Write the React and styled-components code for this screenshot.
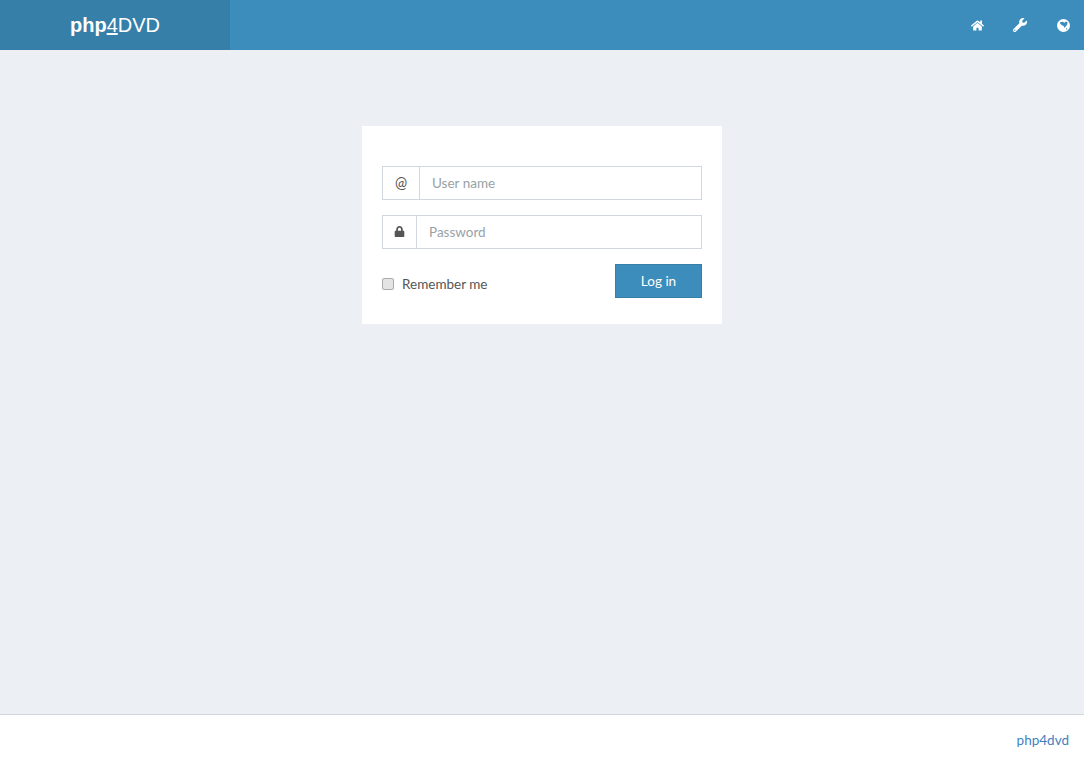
import React from "react";
import styled, { createGlobalStyle } from "styled-components";
import { FaHome, FaWrench, FaLock } from "react-icons/fa";

const Global = createGlobalStyle`
  html, body { margin: 0; padding: 0; height: 100%; }
  body { font-family: "Lato", "Open Sans", sans-serif; font-size: 13.5px; background: #ecf0f5; color: #555; }
  input::placeholder { color: #98a2a6; opacity: 1; }
`;

const Page = styled.div`
  display: flex;
  flex-direction: column;
  height: 765px;
  overflow: hidden;
`;

const Header = styled.header`
  display: flex;
  justify-content: space-between;
  height: 50px;
  flex: none;
  background: #3c8dbc;
`;

const Logo = styled.a`
  display: flex;
  align-items: center;
  justify-content: center;
  width: 230px;
  background: #367fa9;
  color: #fff;
  font-family: "Liberation Sans", Arial, sans-serif;
  font-size: 20px;
  line-height: 50px;
  text-decoration: none;
`;

const LogoStrong = styled.b`
  font-weight: 700;
`;

const LogoFour = styled.span`
  text-decoration: underline;
`;

const Nav = styled.nav`
  display: flex;
  align-items: center;
  gap: 29px;
  padding-right: 14px;
`;

const NavIcon = styled.a`
  display: flex;
  width: 14px;
  justify-content: center;
  color: #fff;
  font-size: ${(p) => p.$size}px;
`;

const Globe = styled.svg`
  width: 13px;
  height: 13px;
  display: block;
`;

const Main = styled.main`
  flex: 1;
  display: flex;
  justify-content: center;
  align-items: flex-start;
  padding-top: 76px;
`;

const Card = styled.form`
  width: 360px;
  box-sizing: border-box;
  padding: 40px 20px 26px;
  background: #fff;
  display: flex;
  flex-direction: column;
  gap: 15px;
`;

const InputGroup = styled.div`
  display: flex;
  height: 34px;
  box-sizing: border-box;
  border: 1px solid #d2d6de;
`;

const Addon = styled.span`
  flex: none;
  width: ${(p) => p.$width}px;
  box-sizing: border-box;
  padding-bottom: 1px;
  display: flex;
  align-items: center;
  justify-content: center;
  border-right: 1px solid #d2d6de;
  color: #555;
  font-size: 14.5px;
`;

const Field = styled.input`
  flex: 1;
  min-width: 0;
  border: 0;
  outline: 0;
  padding: 0 12px;
  font: inherit;
  color: #555;
  background: transparent;
`;

const Actions = styled.div`
  display: flex;
  justify-content: space-between;
  align-items: center;
`;

const Remember = styled.label`
  display: flex;
  align-items: center;
  gap: 8px;
  padding-top: 6px;
  color: #555;
`;

const Check = styled.input`
  appearance: none;
  box-sizing: border-box;
  width: 12px;
  height: 12px;
  margin: 0;
  border: 1px solid #aaa;
  border-radius: 2px;
  background: #e4e4e4;
`;

const Submit = styled.button`
  width: 87px;
  height: 34px;
  box-sizing: border-box;
  border: 1px solid #367fa9;
  padding: 0;
  background: #3c8dbc;
  color: #fff;
  font: inherit;
`;

const Footer = styled.footer`
  flex: none;
  height: 51px;
  box-sizing: border-box;
  border-top: 1px solid #d2d6de;
  background: #fff;
  padding: 17px 15px 0;
  text-align: right;
`;

const FooterLink = styled.a`
  color: #3f7fbf;
  text-decoration: none;
`;

export default function App() {
  return (
    <Page>
      <Global />
      <Header>
        <Logo href="#">
          <LogoStrong>php</LogoStrong>
          <LogoFour>4</LogoFour>DVD
        </Logo>
        <Nav>
          <NavIcon $size={13}><FaHome /></NavIcon>
          <NavIcon $size={14}><FaWrench /></NavIcon>
          <NavIcon $size={13}>
            <Globe viewBox="0 0 14 14">
              <circle cx="7" cy="7" r="7" fill="#fff" />
              <path d="M3.2 3.4 L6.4 3 L8 4 L9.6 2.8 L11.4 3.6 L11 6 L9.4 8.2 L8 9.6 L7.4 7.8 L5.4 6.6 L3.6 5.4 Z" fill="#3c8dbc" />
              <path d="M9.6 10.2 L11 9.8 L10.8 11.2 L9.8 11.4 Z" fill="#3c8dbc" />
            </Globe>
          </NavIcon>
        </Nav>
      </Header>
      <Main>
        <Card onSubmit={(e) => e.preventDefault()}>
          <InputGroup>
            <Addon $width={37}>@</Addon>
            <Field placeholder="User name" />
          </InputGroup>
          <InputGroup>
            <Addon $width={34}><FaLock size={11} /></Addon>
            <Field type="password" placeholder="Password" />
          </InputGroup>
          <Actions>
            <Remember><Check type="checkbox" />Remember me</Remember>
            <Submit type="submit">Log in</Submit>
          </Actions>
        </Card>
      </Main>
      <Footer><FooterLink href="#">php4dvd</FooterLink></Footer>
    </Page>
  );
}
